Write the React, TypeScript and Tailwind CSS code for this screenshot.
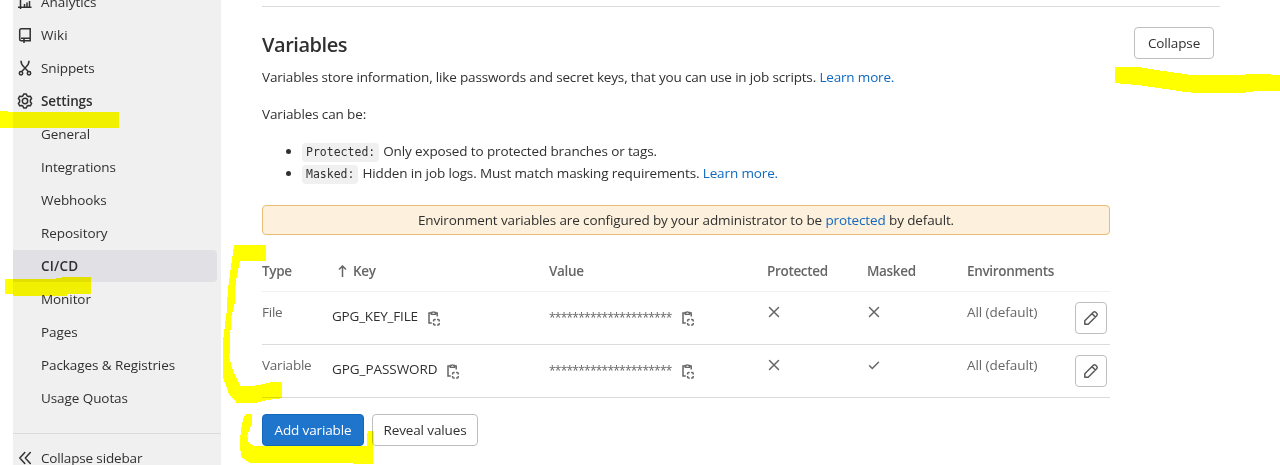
import React from "react";

type IconProps = { children: React.ReactNode; className?: string };

function Icon({ children, className = "" }: IconProps) {
  return (
    <svg viewBox="0 0 16 16" className={`h-4 w-4 shrink-0 ${className}`} fill="none" stroke="currentColor" strokeWidth="1.5">
      {children}
    </svg>
  );
}

const ChartIcon = () => (
  <Icon><path d="M3.5 0v15M1 13.2h13.5M7.5 13v-3M10 13V8.5M12.5 13V7" /></Icon>
);
const BookIcon = () => (
  <Icon><path d="M4 11.2h9.2V1.8H4.2A1.5 1.5 0 0 0 2.7 3.3v9c0 1 .6 1.5 1.5 1.5h2M13.2 11v2.8H8M7 11.5V16M4 13.8h4" /></Icon>
);
const ScissorsIcon = () => (
  <Icon>
    <path d="M4 .7c0 3 1.2 4.7 3 6.3l4 4.3M12 .7c0 3-1.2 4.7-3 6.3l-4 4.3" />
    <circle cx="4" cy="13.2" r="1.7" />
    <circle cx="12" cy="13.2" r="1.7" />
  </Icon>
);
const GearIcon = () => (
  <Icon>
    <path d="M6.7 1h2.6l.7 1.8 1.3.7 2-.3 1.3 2.3-1.2 1.5v2l1.2 1.5-1.3 2.3-2-.3-1.3.7L9.3 15H6.7L6 13.2l-1.3-.7-2 .3-1.3-2.3L2.600 9V7L1.400 5.500l1.300-2.300 2 .3L6 2.800z" strokeLinejoin="round" />
    <circle cx="8" cy="8" r="2.7" />
  </Icon>
);
const ChevronsIcon = () => (
  <Icon><path d="M7.8 2.5 2.8 8l5 5.5M13.3 2.5l-5 5.5 5 5.5" strokeLinecap="round" strokeLinejoin="round" /></Icon>
);
const CopyIcon = () => (
  <Icon>
    <path d="M5.800 13H3V3h2.500M9.500 3h1.700v3.500" />
    <path d="M5.300 4.300V2.500h1a1.300 1.300 0 0 1 2.300 0h1v1.800z" strokeWidth="1.300" />
    <path d="M7.600 11.500V10.400a1 1 0 0 1 1-1H9.700M11.100 9.400H12.200a1 1 0 0 1 1 1V11.500M13.200 12.900V14.100a1 1 0 0 1-1 1H11.100M9.700 15.100H8.600a1 1 0 0 1-1-1V12.900" />
  </Icon>
);
const CrossIcon = () => (
  <Icon className="-ml-px"><path d="m3.500 3.500 9 9M12.500 3.500l-9 9" strokeLinecap="round" /></Icon>
);
const CheckIcon = () => (
  <Icon className="-ml-px"><path d="m3.500 8.700 2.800 2.800 6.200-6.200" strokeLinecap="round" /></Icon>
);
const PencilIcon = () => (
  <Icon className="text-[#5a5a5a]">
    <path d="M1.800 14.200v-3.400l8.500-8.500a1.700 1.700 0 0 1 2.400 0l1 1a1.700 1.700 0 0 1 0 2.400l-8.500 8.500zM9 3.600 12.400 7" strokeLinejoin="round" />
  </Icon>
);

const mainItems = [
  { label: "Analytics", icon: <ChartIcon />, track: "tracking-[-0.02px]" },
  { label: "Wiki", icon: <BookIcon />, track: "tracking-[0.1px]" },
  { label: "Snippets", icon: <ScissorsIcon />, track: "tracking-[-0.1px]" },
  { label: "Settings", icon: <GearIcon />, track: "font-semibold tracking-[-0.1px]" },
];
const subItems = ["General", "Integrations", "Webhooks", "Repository", "CI/CD", "Monitor", "Pages", "Packages & Registries", "Usage Quotas"];

function Sidebar() {
  return (
    <aside className="ml-[13px] h-[465px] w-52 shrink-0 overflow-hidden bg-[#f0f0f0] text-[#303030]">
      <nav className="-mt-[14px]">
        {mainItems.map((item) => (
          <div key={item.label} className="mb-px flex h-8 items-center gap-2 pl-1">
            {item.icon}
            <span className={item.track}>{item.label}</span>
          </div>
        ))}
        {subItems.map((label) => (
          <div
            key={label}
            className={
              label === "CI/CD"
                ? "mb-px mr-1 flex h-8 items-center rounded-r bg-[#e1e0e5] pl-7 font-semibold tracking-[0.2px]"
                : "mb-px flex h-8 items-center pl-7 tracking-[-0.08px]"
            }
          >
            {label}
          </div>
        ))}
      </nav>
      <div className="mt-[19px] flex h-[49px] items-center gap-2 border-t border-[#dbdbdb] pl-1">
        <ChevronsIcon />
        <span className="tracking-[-0.15px]">Collapse sidebar</span>
      </div>
    </aside>
  );
}

const buttonBase = "flex h-8 items-center justify-center whitespace-nowrap rounded border border-[#bfbfbf] bg-white";
const columns = "grid grid-cols-[70px_217px_218px_100px_100px_108px_32px]";

function VariableRow({ type, name, masked }: { type: string; name: string; masked: boolean }) {
  return (
    <div className={`${columns} h-[53px] border-b border-[#dbdbdb] text-[#666]`}>
      <div className="pt-[10px] leading-5 tracking-[-0.22px]">{type}</div>
      <div className="flex gap-2 pt-[14px] leading-5">
        <span className={masked ? "w-[105px] tracking-[-0.06px] text-[#303030]" : "w-[86px] tracking-[-0.2px] text-[#303030]"}>{name}</span>
        <span className="pt-1"><CopyIcon /></span>
      </div>
      <div className="flex pt-[14px] leading-5">
        <span className="w-[131px] pt-[2px] text-[12px] leading-5 tracking-[-0.77px]">*********************</span>
        <span className="pt-1"><CopyIcon /></span>
      </div>
      <div className="pt-3"><CrossIcon /></div>
      <div className="pt-3">{masked ? <CheckIcon /> : <CrossIcon />}</div>
      <div className="pt-[10px] leading-5 tracking-[-0.06px]">All (default)</div>
      <button className={`${buttonBase} mt-[10px] w-8`} aria-label="Edit"><PencilIcon /></button>
    </div>
  );
}

function Highlights() {
  return (
    <svg className="pointer-events-none absolute inset-0 h-[465px] w-[1280px] mix-blend-multiply" viewBox="0 0 1280 465" fill="#ff0" shapeRendering="crispEdges">
      <path d="M0 111h8v1h111v16H0z" />
      <path d="M5 279h51v-1h6v-1h29v17H67v2H13v-2H5z" />
      <g transform="translate(220 235) scale(.33333)">
        <path d="M42 30H138V77H60L54 108 47 140 45 200 33 250 28 370 40 410 62 453H95L122 449 155 441H185V490L140 495 110 503H50L28 480 10 430V310L20 230 24 160 36 75z" />
        <path d="M78 537H96V565L82 600 84 620 100 632H440L443 588H462L460 640V688H400V684H90L65 668 60 640 62 590 70 550z" />
      </g>
      <path transform="translate(1090) scale(.33333)" d="M75 201H145L200 210 250 217 310 226H440L492 221H543V225H570V273H498L460 279H318L280 275 220 266 150 256 75 249z" />
    </svg>
  );
}

const codeStyle = "mr-1 inline-block rounded bg-[#f0f0f0] px-1 font-['DejaVu_Sans_Mono',monospace] text-[11.5px] leading-[19px] tracking-[0px]";

export default function App() {
  return (
    <div className="relative flex h-[465px] w-[1280px] overflow-hidden whitespace-nowrap bg-white font-['Open_Sans','Noto_Sans',sans-serif] text-[13.5px] leading-5 tracking-[-0.13px] text-[#303030]">
      <Sidebar />
      <main className="ml-[41px] w-[958px] shrink-0">
        <div className="mt-[6px] h-px bg-[#dbdbdb]" />
        <header className="flex h-[60px] justify-between pr-[6px] pt-5">
          <h4 className="mt-[6px] text-[20px] font-semibold leading-6 tracking-[-0.45px]">Variables</h4>
          <button className={`${buttonBase} w-20`}>Collapse</button>
        </header>
        <p className="tracking-[-0.165px]">
          Variables store information, like passwords and secret keys, that you can use in job scripts. <a className="text-[#1068bf]">Learn more.</a>
        </p>
        <p className="mt-[17px]">Variables can be:</p>
        <ul className="mt-[16px] list-disc pl-10 leading-[22px]">
          <li>
            <code className={codeStyle}>Protected:</code>
            Only exposed to protected branches or tags.
          </li>
          <li>
            <code className={codeStyle}>Masked:</code>
            Hidden in job logs. Must match masking requirements. <a className="text-[#1068bf]">Learn more.</a>
          </li>
        </ul>
        <div className="mt-[21px] flex h-[30px] w-[848px] items-center justify-center rounded border border-[#e9be74] bg-[#fdf1dd]">
          <span>Environment variables are configured by your administrator to be <a className="text-[#1068bf]">protected</a> by default.</span>
        </div>
        <div className="w-[848px]">
          <div className={`${columns} h-[57px] border-b border-[#f0f0f0] pt-[26px] font-semibold tracking-[-0.33px] text-[#666]`}>
            <span>Type</span>
            <span className="flex pl-[6px]">
              <svg className="mr-[6px] mt-1 h-3 w-[9px]" viewBox="0 0 9 12" fill="none" stroke="currentColor" strokeWidth="1.5"><path d="M4.5 12V1M1 4.5 4.5 1 8 4.5" /></svg>
              Key
            </span>
            <span>Value</span>
            <span>Protected</span>
            <span>Masked</span>
            <span>Environments</span>
          </div>
          <VariableRow type="File" name="GPG_KEY_FILE" masked={false} />
          <VariableRow type="Variable" name="GPG_PASSWORD" masked />
        </div>
        <div className="mt-4 flex gap-2">
          <button className="h-8 w-[102px] rounded border border-[#1068bf] bg-[#1f75cb] text-white">Add variable</button>
          <button className={`${buttonBase} w-[106px]`}>Reveal values</button>
        </div>
      </main>
      <Highlights />
    </div>
  );
}
